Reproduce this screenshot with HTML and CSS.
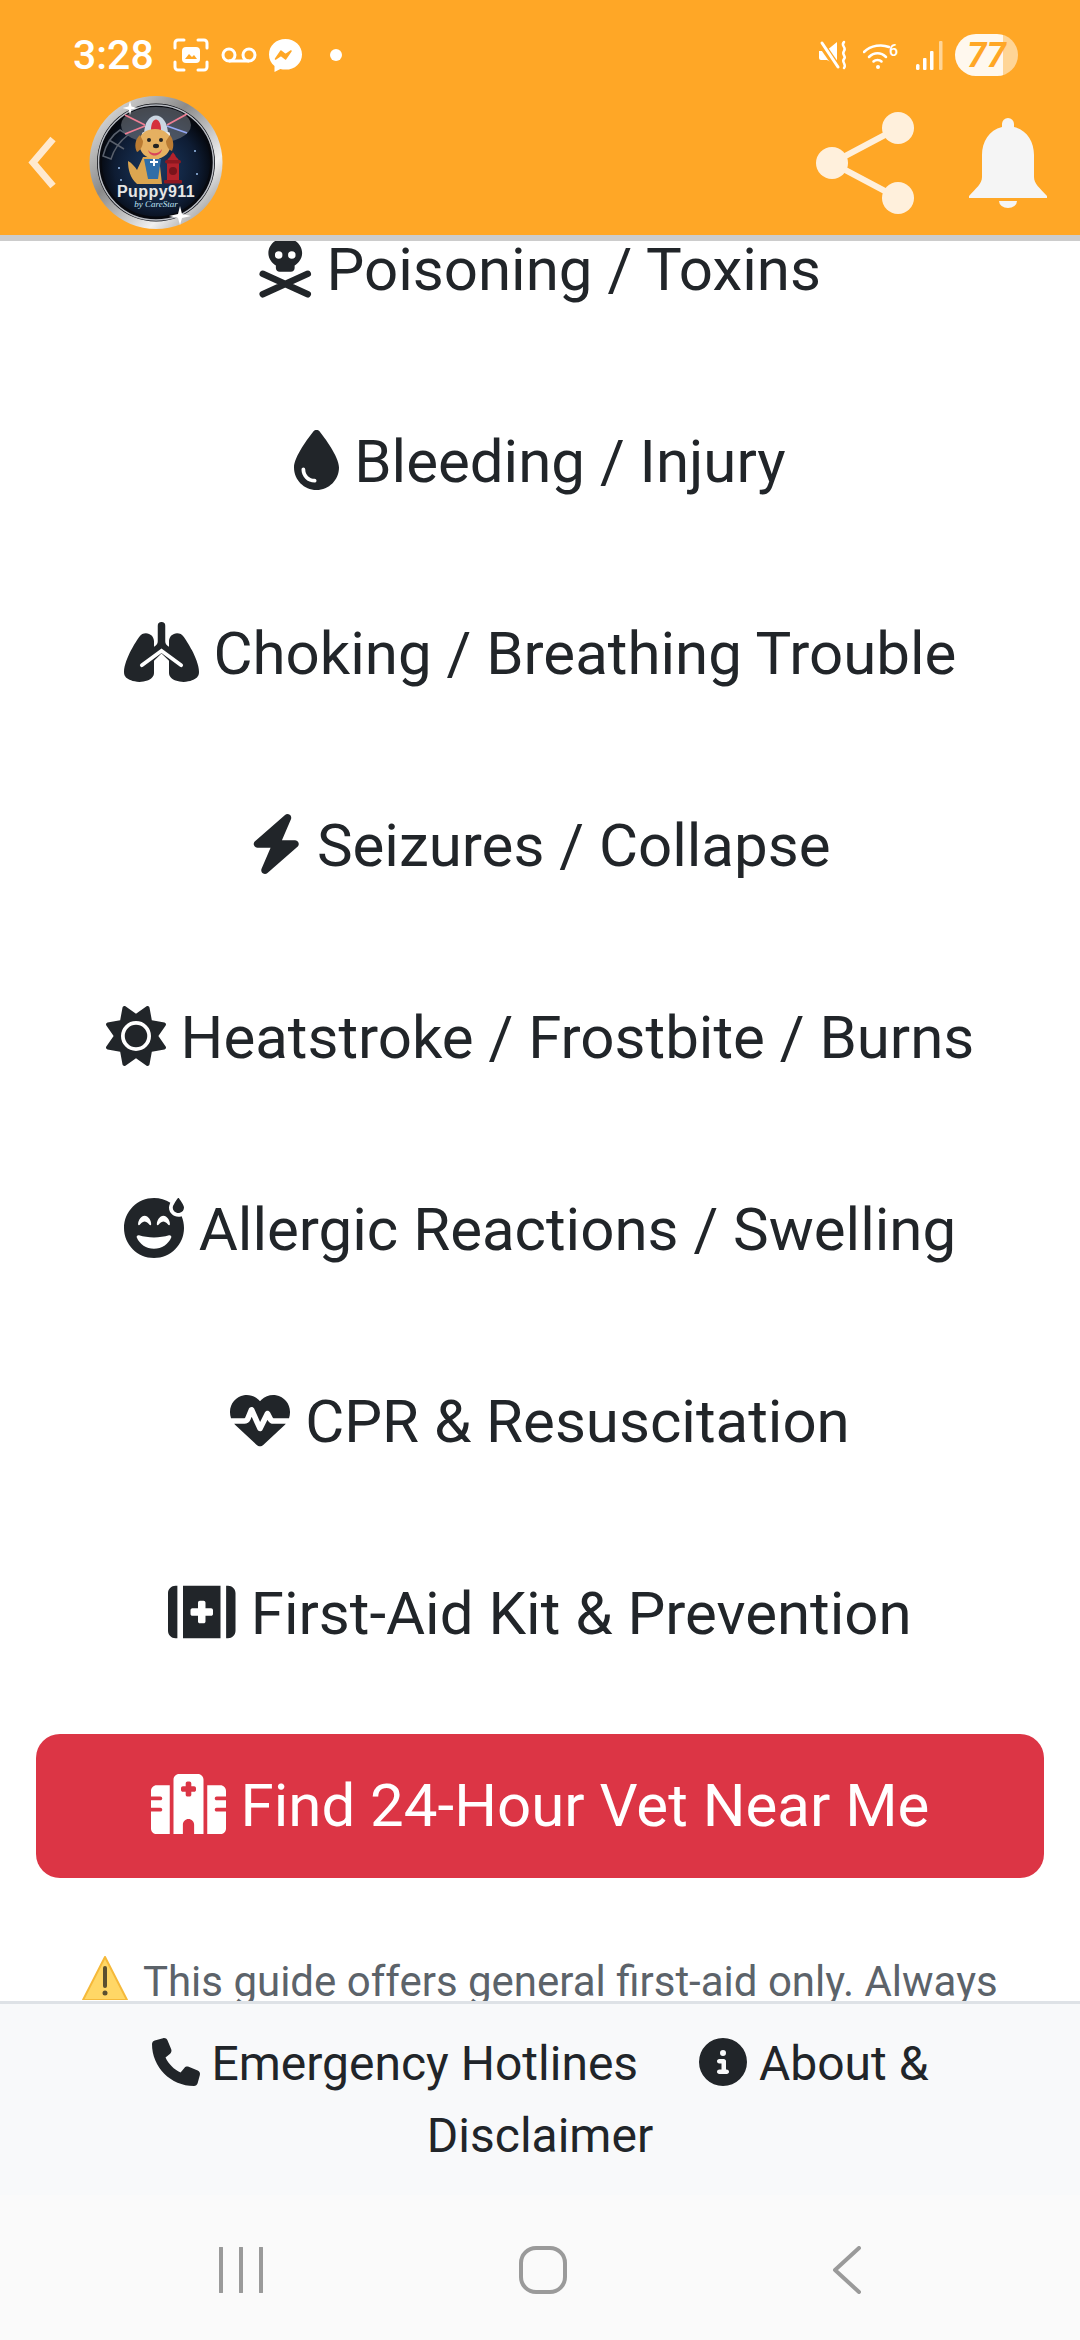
FILE: index.html
```html
<!DOCTYPE html>
<html lang="en">
<head>
<meta charset="utf-8">
<title>Puppy911</title>
<link rel="stylesheet" href="styles.css">
</head>
<body>
<div class="screen">
  <header class="top">
    <div class="status">
      <div class="status-left">
        <span class="time">3:28</span>
        <svg class="si si-shot" viewBox="0 0 36 34"><g fill="none" stroke="#fff" stroke-width="3" stroke-linecap="round"><path d="M2 10V5a3 3 0 0 1 3-3h6M25 2h6a3 3 0 0 1 3 3v5M34 24v5a3 3 0 0 1-3 3h-6M11 32H5a3 3 0 0 1-3-3v-5"/></g><rect x="9" y="9" width="18" height="16" rx="4" fill="#fff"/><path d="M12 21l4-5 3 3 2-2 3 4z" fill="#ffa726"/></svg>
        <svg class="si si-vm" viewBox="0 0 36 16"><g fill="none" stroke="#fff" stroke-width="3"><circle cx="8" cy="8" r="6"/><circle cx="28" cy="8" r="6"/><path d="M8 14h20"/></g></svg>
        <svg class="si si-ms" viewBox="0 0 33 33"><path d="M16.500 0C7 0 0 6.700 0 15.400c0 4.700 2 8.800 5.500 11.500V33l5.800-3.100c1.600.4 3.300.7 5.200.7 9.500 0 16.500-6.700 16.500-15.200S26 0 16.500 0z" fill="#fff"/><path d="M6.500 20l5.500-8 4.500 3.600 5.500-3.600-5.500 8-4.500-3.600z" fill="#ffa726" stroke="#ffa726" stroke-width="1.500" stroke-linejoin="round"/></svg>
        <span class="dot"></span>
      </div>
      <div class="status-right">
        <svg class="si si-mute" viewBox="0 0 29 30"><path d="M0 11h7l11-9v24L8 20H2a2 2 0 0 1-2-2z" fill="#fff"/><path d="M1 2l18 26" stroke="#ffa726" stroke-width="7"/><path d="M3 3l16 24" stroke="#fff" stroke-width="3" stroke-linecap="round"/><path d="M25 2c-4 4 3 5 0 9s3 5 0 8 3 5 0 9" fill="none" stroke="#fff" stroke-width="2.500" stroke-linecap="round"/></svg>
        <svg class="si si-wifi" viewBox="0 0 37 27"><g fill="none" stroke="#fff" stroke-width="2.500" stroke-linecap="round"><path d="M1 10C8 3 19 2 26 5"/><path d="M6 15c5-5 12-5 17 0"/><path d="M10.500 19.500c2-2 6-2 8 0"/></g><circle cx="15" cy="25" r="2" fill="#fff"/><text x="26" y="14" class="wifi-six">6</text></svg>
        <svg class="si si-signal" viewBox="0 0 27 29"><g fill="#fff"><rect x="0" y="23" width="3.500" height="6" rx="1.500"/><rect x="7" y="17" width="3.500" height="12" rx="1"/><rect x="14" y="10" width="3.500" height="19" rx="1"/></g><rect x="23" y="0" width="3.500" height="29" rx="1" fill="#ffd596"/></svg>
        <span class="battery"><span class="battery-num">77</span></span>
      </div>
    </div>
    <div class="appbar">
      <svg class="back" viewBox="0 0 30 55"><path d="M26 4L6 27.500 26 51" fill="none" stroke="#ffe9cf" stroke-width="7"/></svg>
      <svg class="logo" viewBox="0 0 134 133">
        <defs>
          <radialGradient id="bg" cx=".5" cy=".55" r=".55"><stop offset="0" stop-color="#1b3a63"/><stop offset=".7" stop-color="#0e1c33"/><stop offset="1" stop-color="#04060b"/></radialGradient>
          <linearGradient id="rim" x1="0" y1="0" x2="1" y2="1"><stop offset="0" stop-color="#f4f4f4"/><stop offset=".4" stop-color="#8a8a8a"/><stop offset=".72" stop-color="#f0f0f0"/><stop offset="1" stop-color="#707070"/></linearGradient>
        </defs>
        <circle cx="67" cy="66.500" r="66.500" fill="url(#rim)"/>
        <circle cx="67" cy="66.500" r="59" fill="#07090f"/>
        <circle cx="67" cy="66.500" r="57.500" fill="none" stroke="#b9bcc2" stroke-width="1.500"/>
        <circle cx="67" cy="66.500" r="54" fill="url(#bg)"/>
        <ellipse cx="67" cy="29" rx="35" ry="18" fill="#72777f" opacity=".6"/>
        <path d="M14 60c3-12 9-21 17-26l8 5c-8 6-14 14-17 24zM20 44l15 9" fill="none" stroke="#59606c" stroke-width="1.500"/>
        <path d="M36 19l20 10M36 38l20-8M98 18L78 29" stroke="#ef7f94" stroke-width="1.800"/>
        <path d="M98 37l-20-7" stroke="#95a8f5" stroke-width="1.800"/>
        <path d="M55 39c0-26 24-26 24 0z" fill="#cbd6e2"/>
        <path d="M62 34c0-14 10-14 10 0z" fill="#d52f3c"/>
        <rect x="53" y="36" width="28" height="5" rx="2" fill="#ececec"/>
        <path d="M48 88c-7-6-9-15-9-23 4 2 7 6 9 9l6-13h16l3 27z" fill="#dca650"/>
        <path d="M55 63l17 0-3 20-10 0z" fill="#2f6ea8"/>
        <path d="M64 62h2v3h3v2h-3v3h-2v-3h-3v-2h3z" fill="#fff"/>
        <path d="M50 47c0-9 7-14 16-14s16 5 16 14-7 16-16 16-16-7-16-16z" fill="#e5b061"/>
        <path d="M51 39c-5 4-6 12-3 17 3-1 6-6 6-11zM81 39c4 5 4 12 2 16-3-1-6-5-6-10z" fill="#bb7c33"/>
        <circle cx="60" cy="44" r="2" fill="#222"/><circle cx="72" cy="44" r="2" fill="#222"/>
        <ellipse cx="67" cy="50" rx="3" ry="2.200" fill="#222"/>
        <path d="M59 54c4 5 11 4 14-1-1 8-12 9-14 1z" fill="#d8455a"/>
        <path d="M78 86V66c0-3 2-4 3-5 1-3 3-4 3-5 0 1 2 2 3 5 1 1 3 2 3 5v20z" fill="#b3222b"/>
        <rect x="76" y="64" width="16" height="3.500" rx="1.700" fill="#8d1820"/>
        <rect x="75" y="84" width="18" height="3.500" rx="1" fill="#8d1820"/>
        <circle cx="84" cy="75" r="4" fill="#7a141b"/>
        <circle cx="30" cy="72" r="1" fill="#9cc1ee"/><circle cx="106" cy="55" r="1" fill="#9cc1ee"/><circle cx="108" cy="78" r="1" fill="#9cc1ee"/><circle cx="32" cy="84" r="1" fill="#9cc1ee"/>
        <text x="67" y="101" class="logo-title">Puppy911</text>
        <text x="67" y="111" class="logo-sub">by CareStar</text>
        <path d="M91 110l2 8 9 2-9 2-2 7-2-7-9-2 9-2z" fill="#fff"/>
        <path d="M41 5l1.500 5.500 6 1.500-6 1.500-1.500 5.500-1.500-5.500-6-1.500 6-1.500z" fill="#fff"/>
      </svg>
      <div class="appbar-actions">
        <svg class="share" viewBox="0 0 98 102"><g fill="#fff0dc"><circle cx="82" cy="16" r="16"/><circle cx="16" cy="51" r="16"/><circle cx="82" cy="86" r="16"/></g><path d="M82 16L16 51l66 35" fill="none" stroke="#fff0dc" stroke-width="6"/></svg>
        <svg class="bell" viewBox="0 0 78 90"><path d="M39 0a6 6 0 0 1 6 6v3c13 3 20 15 20 28v22c0 7 6 11 13 19v2H0v-2c7-8 13-12 13-19V37C13 24 20 12 33 9V6a6 6 0 0 1 6-6z" fill="#f5f5f5"/><path d="M30 83h18a9 7 0 0 1-18 0z" fill="#f5f5f5"/></svg>
      </div>
    </div>
  </header>

  <main class="content">
    <ul class="guide">
      <li class="guide-item"><svg class="fa" viewBox="0 0 448 512"><path d="M368 128c0 44.400-25.400 83.500-64 106.400V256c0 17.700-14.300 32-32 32H176c-17.700 0-32-14.300-32-32V234.400c-38.600-22.900-64-62-64-106.400C80 57.300 144.500 0 224 0s144 57.300 144 128zM168 176a32 32 0 1 0 0-64 32 32 0 1 0 0 64zm144-32a32 32 0 1 0-64 0 32 32 0 1 0 64 0z"/><path d="M32 306L416 480M416 306L32 480" stroke="#212529" stroke-width="56" stroke-linecap="round"/></svg> Poisoning / Toxins</li>
      <li class="guide-item"><svg class="fa" viewBox="0 0 384 512"><path d="M192 512C86 512 0 426 0 320C0 228.800 130.200 57.700 166.600 11.700C172.600 4.200 181.500 0 191.100 0h1.800c9.600 0 18.500 4.200 24.500 11.700C253.800 57.700 384 228.800 384 320c0 106-86 192-192 192zM96 336c0-8.800-7.200-16-16-16s-16 7.200-16 16c0 61.900 50.100 112 112 112c8.800 0 16-7.200 16-16s-7.200-16-16-16c-44.200 0-80-35.800-80-80z"/></svg> Bleeding / Injury</li>
      <li class="guide-item"><svg class="fa" viewBox="0 0 640 512"><path d="M288 32a32 32 0 0 1 64 0V164c0 16 8 32 22 40l10 7V165C384 127 415 96 453 96c22 0 43 10 56 29 15 22 44 65 71 117 26 51 60 127 60 184 0 42-26 57-60 72-30 14-90 20-140 2-32-12-56-36-56-65V330L320 268l-64 62V435c0 29-24 53-56 65-50 18-110 12-140-2-34-15-60-30-60-72 0-57 34-133 60-184 27-52 56-95 71-117 13-19 34-29 56-29 38 0 69 31 69 69v46l10-7c14-8 22-24 22-40z"/><path d="M152 369L320 246l168 123" fill="none" stroke="#fff" stroke-width="32" stroke-linecap="round" stroke-linejoin="miter"/></svg> Choking / Breathing Trouble</li>
      <li class="guide-item"><svg class="fa" viewBox="0 0 448 512"><path d="M349.400 44.600c5.900-13.700 1.500-29.700-10.600-38.500s-28.600-8-39.900 1.800l-256 224c-10 8.800-13.600 22.900-8.900 35.300S50.700 288 64 288H175.500L98.600 467.400c-5.900 13.700-1.500 29.700 10.600 38.500s28.600 8 39.900-1.800l256-224c10-8.800 13.600-22.900 8.900-35.300s-16.600-20.700-30-20.700H272.500L349.400 44.600z"/></svg> Seizures / Collapse</li>
      <li class="guide-item"><svg class="fa" viewBox="0 0 512 512"><path d="M361.500 1.200c5 2.100 8.600 6.600 9.600 11.900L391 121l107.900 19.800c5.300 1 9.800 4.600 11.900 9.600s1.500 10.700-1.600 15.200L446.900 256l62.300 90.300c3.100 4.500 3.700 10.200 1.600 15.200s-6.600 8.600-11.900 9.600L391 391 371.100 498.900c-1 5.300-4.600 9.800-9.600 11.900s-10.700 1.500-15.200-1.600L256 446.900l-90.300 62.300c-4.500 3.100-10.200 3.700-15.200 1.600s-8.600-6.600-9.600-11.900L121 391 13.100 371.100c-5.300-1-9.800-4.600-11.900-9.600s-1.500-10.700 1.600-15.200L65.100 256 2.800 165.700c-3.100-4.500-3.700-10.200-1.600-15.200s6.600-8.600 11.900-9.600L121 121 140.900 13.100c1-5.300 4.600-9.800 9.600-11.900s10.700-1.500 15.200 1.600L256 65.100 346.300 2.800c4.500-3.100 10.200-3.700 15.200-1.600zM160 256a96 96 0 1 1 192 0 96 96 0 1 1-192 0zm224 0a128 128 0 1 0-256 0 128 128 0 1 0 256 0z"/></svg> Heatstroke / Frostbite / Burns</li>
      <li class="guide-item"><svg class="fa" viewBox="0 0 512 512"><path d="M476.800 126.300c-4.100 1.100-8.400 1.700-12.800 1.700c-26.500 0-48-21-48-47c0-5 1.800-11.300 4.600-18.100c.3-.7 .6-1.400 .9-2.100c9-20.200 26.500-44.900 36-57.500c3.200-4.400 9.600-4.400 12.800 0C483.400 20.600 512 61 512 81c0 21.700-15 40-35.200 45.300zM256 0c51.400 0 99.300 15.200 139.400 41.200c-1.500 3.100-3 6.200-4.300 9.300c-3.400 8-7.100 19-7.100 30.500c0 44.300 36.600 79 80 79c9.600 0 18.800-1.700 27.400-4.800c13.300 30.900 20.600 65 20.600 100.800c0 141.400-114.600 256-256 256S0 397.400 0 256S114.600 0 256 0zM383.800 317.800C345.300 329.400 301.900 336 256 336s-89.300-6.600-127.800-18.200c-12.300-3.700-24.300 7-19.200 18.700c24.500 56.900 81.100 96.700 147 96.700s122.500-39.800 147-96.700c5.100-11.800-6.900-22.400-19.200-18.700zm-166.200-89c2.100 2.800 5.700 3.900 8.900 2.800s5.500-4.100 5.500-7.600c0-17.900-6.700-35.600-16.600-48.800c-9.800-13-23.900-23.200-39.400-23.200s-29.600 10.200-39.400 23.200C126.700 188.400 120 206.100 120 224c0 3.400 2.200 6.500 5.500 7.600s6.900 0 8.900-2.800l.2-.2c.2-.2 .4-.5 .7-.9c.6-.8 1.600-2 2.800-3.400c2.500-2.800 6-6.600 10.200-10.300c8.800-7.800 18.800-14 27.700-14s18.900 6.200 27.700 14c4.200 3.700 7.700 7.500 10.200 10.300c1.200 1.400 2.200 2.600 2.800 3.400c.3 .4 .6 .7 .7 .9l.2 .2zm160 0c2.100 2.800 5.700 3.900 8.900 2.800s5.500-4.100 5.500-7.600c0-17.900-6.700-35.600-16.600-48.800c-9.800-13-23.900-23.200-39.400-23.200s-29.600 10.200-39.400 23.200C286.700 188.400 280 206.100 280 224c0 3.400 2.200 6.500 5.500 7.600s6.900 0 8.900-2.800l.2-.2c.2-.2 .4-.5 .7-.9c.6-.8 1.600-2 2.800-3.400c2.500-2.800 6-6.600 10.200-10.300c8.800-7.800 18.800-14 27.700-14s18.900 6.200 27.700 14c4.200 3.700 7.700 7.500 10.200 10.300c1.200 1.400 2.200 2.600 2.800 3.400c.3 .4 .6 .7 .7 .9l.2 .2z"/></svg> Allergic Reactions / Swelling</li>
      <li class="guide-item"><svg class="fa" viewBox="0 0 512 512"><path d="M228.300 469.100L47.600 300.400c-4.200-3.900-8.200-8.100-11.900-12.400h87c22.600 0 43-13.600 51.700-34.500l10.500-25.200 49.300 109.500c3.800 8.500 12.100 14 21.400 14.100s17.800-5 22-13.300L320 253.700l1.700 3.400c9.500 19 28.900 31 50.100 31H476.300c-3.700 4.300-7.700 8.500-11.900 12.400L283.700 469.100c-7.500 7-17.400 10.900-27.700 10.900s-20.200-3.900-27.700-10.900zM503.700 240h-132c-3 0-5.800-1.700-7.200-4.400l-23.200-46.300c-4.100-8.100-12.400-13.300-21.500-13.300s-17.400 5.100-21.500 13.300l-41.400 82.800L205.900 158.200c-3.900-8.700-12.700-14.300-22.200-14.100s-18.100 5.900-21.800 14.800l-31.800 76.300c-1.200 3-4.200 4.900-7.400 4.900H16c-2.600 0-5 .4-7.300 1.100C3 225.200 0 208.200 0 190.900v-5.800c0-69.900 50.500-129.500 119.400-141C165 36.500 211.400 51.400 244 84l12 12 12-12c32.600-32.600 79-47.500 124.600-39.900C461.500 55.600 512 115.200 512 185.100v5.800c0 16.900-2.800 33.500-8.300 49.100z"/></svg> CPR &amp; Resuscitation</li>
      <li class="guide-item"><svg class="fa" viewBox="0 0 576 512"><path d="M64 32C28.700 32 0 60.700 0 96V416c0 35.300 28.700 64 64 64H80V32H64zm64 0V480H448V32H128zM512 480c35.300 0 64-28.700 64-64V96c0-35.300-28.700-64-64-64H496V480h16zM256 176c0-8.800 7.200-16 16-16h32c8.800 0 16 7.200 16 16v48h48c8.800 0 16 7.200 16 16v32c0 8.800-7.200 16-16 16H320v48c0 8.800-7.200 16-16 16H272c-8.800 0-16-7.200-16-16V288H208c-8.800 0-16-7.200-16-16V240c0-8.800 7.200-16 16-16h48V176z"/></svg> First-Aid Kit &amp; Prevention</li>
    </ul>
    <a class="vet-btn"><svg class="fa fa-white" viewBox="0 0 640 512"><path d="M192 48c0-26.500 21.500-48 48-48H400c26.500 0 48 21.500 48 48V512H368V432c0-26.500-21.500-48-48-48s-48 21.500-48 48v80H192V48zM48 96H160V512H48c-26.500 0-48-21.500-48-48V320H80c8.800 0 16-7.200 16-16s-7.200-16-16-16H0V224H80c8.800 0 16-7.200 16-16s-7.200-16-16-16H0V144c0-26.500 21.500-48 48-48zm544 0c26.500 0 48 21.500 48 48v48H560c-8.800 0-16 7.200-16 16s7.200 16 16 16h80v64H560c-8.800 0-16 7.200-16 16s7.200 16 16 16h80V464c0 26.500-21.500 48-48 48H480V96H592zM312 64c-8.800 0-16 7.200-16 16v24H272c-8.800 0-16 7.200-16 16v16c0 8.800 7.200 16 16 16h24v24c0 8.800 7.200 16 16 16h16c8.800 0 16-7.200 16-16V152h24c8.800 0 16-7.200 16-16V120c0-8.800-7.200-16-16-16H344V80c0-8.800-7.200-16-16-16H312z"/></svg> Find 24-Hour Vet Near Me</a>
    <p class="disclaimer"><svg class="warn" viewBox="0 0 46 44"><path d="M23 1L45 44H1z" fill="#ffd766" stroke="#f5b93a" stroke-width="2" stroke-linejoin="round"/><path d="M23 12v18" stroke="#5b5030" stroke-width="4" stroke-linecap="round"/><circle cx="23" cy="37" r="2.500" fill="#5b5030"/></svg> This guide offers general first-aid only. Always</p>
  </main>

  <footer class="foot">
    <a class="foot-link"><svg class="fa" viewBox="0 0 512 512"><path d="M164.900 24.600c-7.700-18.600-28-28.500-47.400-23.200l-88 24C12.100 30.200 0 46 0 64C0 311.400 200.600 512 448 512c18 0 33.800-12.100 38.600-29.500l24-88c5.300-19.400-4.600-39.700-23.200-47.400l-96-40c-16.300-6.800-35.200-2.100-46.300 11.600L304.700 368C234.300 334.700 177.300 277.700 144 207.300L193.300 167c13.700-11.200 18.400-30 11.600-46.300l-40-96z"/></svg> Emergency Hotlines</a>
    <a class="foot-link foot-link-second"><svg class="fa" viewBox="0 0 512 512"><path d="M256 512A256 256 0 1 0 256 0a256 256 0 1 0 0 512zM216 336h24V272H216c-13.300 0-24-10.700-24-24s10.700-24 24-24h48c13.300 0 24 10.700 24 24v88h8c13.300 0 24 10.700 24 24s-10.700 24-24 24H216c-13.300 0-24-10.700-24-24s10.700-24 24-24zm40-208a32 32 0 1 1 0 64 32 32 0 1 1 0-64z"/></svg> About &amp; Disclaimer</a>
  </footer>

  <nav class="sysnav">
    <svg class="nav-recent" viewBox="0 0 46 46"><path d="M3 1v44M23 1v44M43 1v44" stroke="#9a9a9a" stroke-width="4" stroke-linecap="round"/></svg>
    <svg class="nav-home" viewBox="0 0 48 48"><rect x="2" y="2" width="44" height="44" rx="15" fill="none" stroke="#9a9a9a" stroke-width="4"/></svg>
    <svg class="nav-back" viewBox="0 0 30 48"><path d="M27 2L3 24l24 22" fill="none" stroke="#9a9a9a" stroke-width="4" stroke-linecap="round" stroke-linejoin="round"/></svg>
  </nav>
</div>
</body>
</html>
```

FILE: styles.css
```css
* { box-sizing: border-box; }
html, body { margin: 0; padding: 0; }
body { font-family: Roboto, "Liberation Sans", sans-serif; color: #212529; background: #fff; }
.screen { width: 1080px; height: 2340px; display: flex; flex-direction: column; overflow: hidden; }

.top { height: 241px; flex: none; background: #ffa726; border-bottom: 6px solid #ccc; }
.status { height: 90px; display: flex; justify-content: space-between; align-items: center; padding: 20px 62px 0 73px; }
.status-left, .status-right { display: flex; align-items: center; }
.time { font-size: 41px; font-weight: 500; color: #fff; line-height: 44px; margin-right: 19px; }
.si { display: block; flex: none; }
.si-shot { width: 36px; height: 34px; margin-right: 12px; }
.si-vm { width: 36px; height: 16px; margin-right: 12px; }
.si-ms { width: 33px; height: 33px; margin-right: 28px; }
.dot { width: 12px; height: 12px; border-radius: 50%; background: #fff; }
.si-mute { width: 29px; height: 30px; margin-right: 15px; }
.si-wifi { width: 37px; height: 27px; margin-right: 16px; }
.si-signal { width: 27px; height: 29px; margin-right: 12px; }
.wifi-six { font-family: Roboto, sans-serif; font-size: 16px; font-weight: 500; fill: #fff; }
.battery { width: 63px; height: 42px; border-radius: 21px; background: linear-gradient(90deg, #fff8ee 0, #fff8ee 76%, #ffd596 76%, #ffd596 100%); display: flex; align-items: center; justify-content: center; }
.battery-num { font-size: 35px; font-weight: 700; font-style: italic; color: #ffa726; line-height: 1; }

.appbar { height: 145px; display: flex; align-items: center; padding: 0 33px 0 27px; }
.back { width: 30px; height: 55px; margin-right: 32px; flex: none; }
.logo { width: 134px; height: 133px; flex: none; }
.logo-title { font-family: "Liberation Sans", Arial, sans-serif; font-size: 16px; font-weight: 700; fill: #e6e6e6; text-anchor: middle; letter-spacing: .4px; }
.logo-sub { font-family: "Liberation Serif", serif; font-size: 9px; font-style: italic; fill: #bfe3f5; text-anchor: middle; }
.appbar-actions { margin-left: auto; display: flex; align-items: center; gap: 55px; }
.share { width: 98px; height: 102px; }
.bell { width: 78px; height: 90px; }

.content { flex: 1; min-height: 0; overflow: hidden; text-align: center; }
.guide { list-style: none; margin: -67px 0 0; padding: 0; }
.guide-item { padding: 51px 0; font-size: 60px; line-height: 90px; color: #212529; }
.fa { height: 1em; width: auto; vertical-align: -0.125em; fill: currentColor; overflow: visible; }
.fa-white { color: #fff; }
.vet-btn { display: block; margin: 24px 36px 0; padding: 27px 0; background: #dc3545; color: #fff; border-radius: 24px; font-size: 60px; line-height: 90px; text-align: center; }
.disclaimer { margin: 72px 0 0; font-size: 42px; line-height: 63px; color: #5c636a; }
.warn { width: 46px; height: 44px; vertical-align: -0.1em; margin-right: 5px; }

.foot { flex: none; height: 194px; border-top: 3px solid #dee2e6; background: #f8f9fa; padding: 24px 130px 0; text-align: center; font-size: 48px; line-height: 72px; color: #212529; }
.foot-link { color: #212529; }
.foot-link-second { margin-left: 49px; }

.sysnav { flex: none; height: 145px; background: #fafafa; display: flex; align-items: flex-start; padding-top: 52px; }
.nav-recent { width: 46px; height: 46px; margin-left: 218px; flex: none; }
.nav-home { width: 48px; height: 48px; margin-left: 255px; margin-top: -1px; flex: none; }
.nav-back { width: 30px; height: 48px; margin-left: 265px; margin-top: -1px; flex: none; }
```
